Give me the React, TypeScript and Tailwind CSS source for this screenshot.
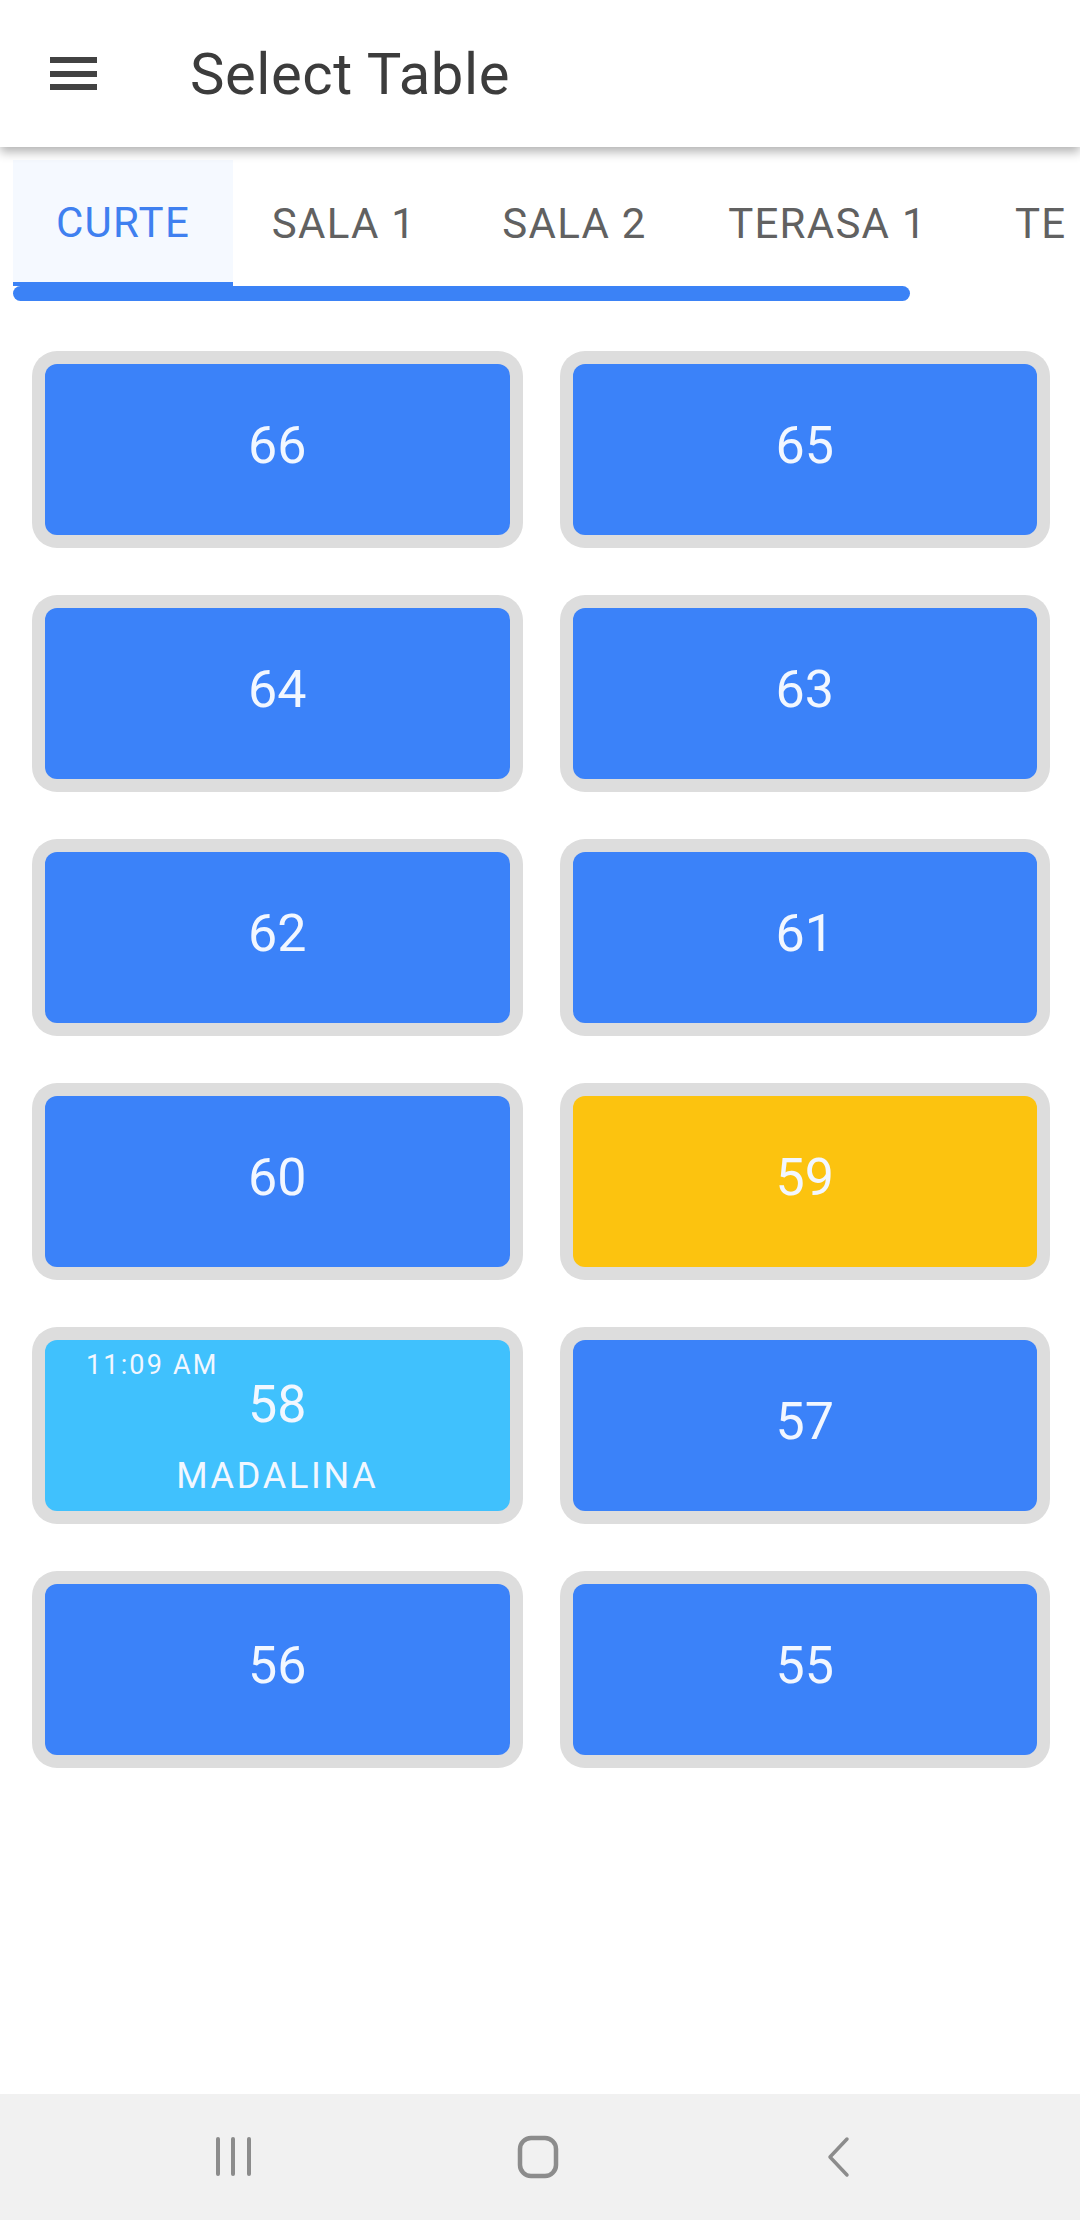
type Table = {
  num: number;
  status: "free" | "busy" | "open";
  time?: string;
  waiter?: string;
};

const TABS = [
  { label: "CURTE", width: "w-[220px]" },
  { label: "SALA 1", width: "w-[222px]" },
  { label: "SALA 2", width: "w-[239px]" },
  { label: "TERASA 1", width: "w-[267px]" },
  { label: "TERASA 2", width: "w-[260px]" },
];

const TABLES: Table[] = [
  { num: 66, status: "free" },
  { num: 65, status: "free" },
  { num: 64, status: "free" },
  { num: 63, status: "free" },
  { num: 62, status: "free" },
  { num: 61, status: "free" },
  { num: 60, status: "free" },
  { num: 59, status: "busy" },
  { num: 58, status: "open", time: "11:09 AM", waiter: "MADALINA" },
  { num: 57, status: "free" },
  { num: 56, status: "free" },
  { num: 55, status: "free" },
];

const tileColor = (status: Table["status"]) => {
  if (status === "busy") return "bg-[#fcc30f]";
  if (status === "open") return "bg-[#40c1fd]";
  return "bg-[#3b82f9]";
};

function TableCard({ table }: { table: Table }) {
  return (
    <div className="h-[197px] rounded-[25px] bg-[#dddddd] p-[13px]">
      <div
        className={`h-full rounded-[12px] ${tileColor(table.status)} text-[#f2f7ff] flex flex-col`}
      >
        {table.status === "open" ? (
          <>
            <div className="pt-[12px] pl-[41px] text-[27px] leading-none tracking-[0.08em]">
              {table.time}
            </div>
            <div className="text-center text-[52px] leading-none">{table.num}</div>
            <div className="mt-[27px] text-center text-[36px] leading-none tracking-[0.075em]">
              {table.waiter}
            </div>
          </>
        ) : (
          <div className="flex-1 flex items-center justify-center pb-[8px] text-[52px] leading-none">
            {table.num}
          </div>
        )}
      </div>
    </div>
  );
}

export default function App() {
  return (
    <div
      className="h-[2220px] flex flex-col bg-white overflow-hidden"
      style={{ fontFamily: "Roboto, 'Noto Sans', sans-serif" }}
    >
      <header className="relative z-10 h-[147px] shrink-0 bg-white flex items-center shadow-[0_5px_10px_rgba(0,0,0,0.3)]">
        <div className="pl-[48px] w-[190px] shrink-0">
          <svg width="52" height="40" viewBox="0 0 52 40" className="block">
            <rect x="2" y="3" width="47" height="6" fill="#424242" />
            <rect x="2" y="17" width="47" height="6" fill="#424242" />
            <rect x="2" y="30" width="47" height="6" fill="#424242" />
          </svg>
        </div>
        <h1 className="text-[58px] leading-none tracking-[0.01em] text-[#3c3c3c]">Select Table</h1>
      </header>

      <div className="px-[13px] pt-[13px]">
        <div className="overflow-hidden">
          <div className="flex w-max">
            {TABS.map((tab, i) => (
              <div
                key={tab.label}
                className={`${tab.width} h-[126px] shrink-0 flex items-center whitespace-nowrap text-[42px] leading-none tracking-[0.03em] ${
                  i === 0
                    ? "bg-[#f5f9ff] text-[#3f80f0] border-b-[4px] border-[#3b82f6] pt-[4px]"
                    : "text-[#616161] pt-[2px]"
                } ${i === 4 ? "justify-start pl-[54px]" : "justify-center"}`}
              >
                {tab.label}
              </div>
            ))}
          </div>
          <div className="w-[897px] h-[15px] rounded-full bg-[#3b82f6]" />
        </div>
      </div>

      <div className="pl-[32px] pr-[30px] pt-[50px] grid grid-cols-2 gap-x-[37px] gap-y-[47px]">
        {TABLES.map((t) => (
          <TableCard key={t.num} table={t} />
        ))}
      </div>

      <div className="flex-1" />

      <nav className="h-[126px] shrink-0 bg-[#f1f1f1] flex items-center justify-center gap-[262px] pr-[14px]">
        <svg width="40" height="42" viewBox="0 0 40 42">
          <rect x="2" y="1" width="4" height="39" rx="2" fill="#8c8c8c" />
          <rect x="17" y="1" width="4" height="39" rx="2" fill="#8c8c8c" />
          <rect x="33" y="1" width="4" height="39" rx="2" fill="#8c8c8c" />
        </svg>
        <svg width="44" height="44" viewBox="0 0 44 44">
          <rect x="4" y="3" width="36" height="38" rx="11" fill="none" stroke="#8c8c8c" strokeWidth="4.5" />
        </svg>
        <svg width="30" height="44" viewBox="0 0 30 44">
          <path d="M25 4 L8 22 L25 40" fill="none" stroke="#8c8c8c" strokeWidth="3.5" strokeLinecap="round" strokeLinejoin="round" />
        </svg>
      </nav>
    </div>
  );
}
